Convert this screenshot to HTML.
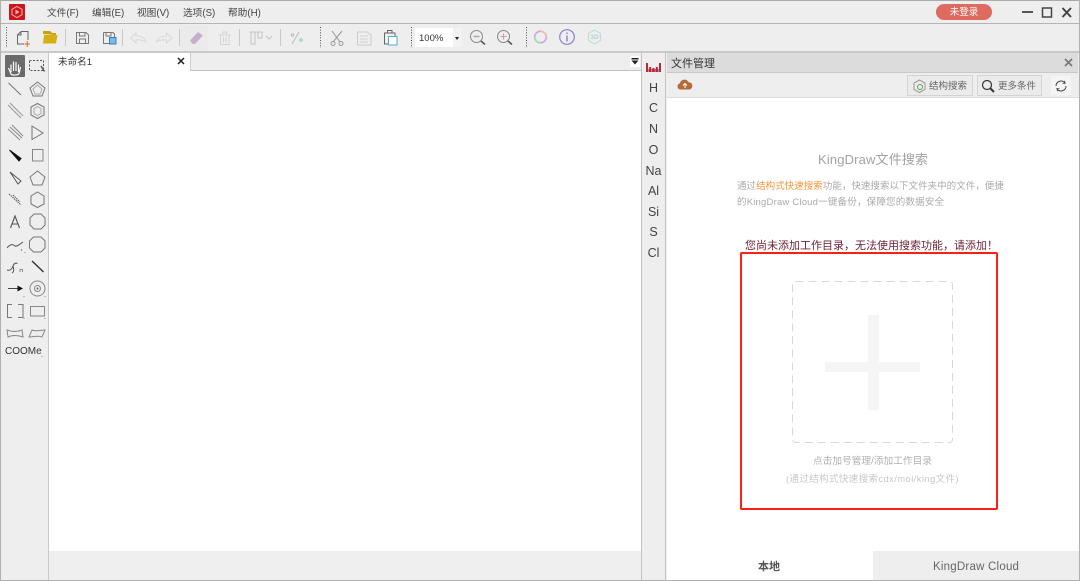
<!DOCTYPE html>
<html><head><meta charset="utf-8"><style>
html,body{margin:0;padding:0}
body{width:1080px;height:581px;overflow:hidden;position:relative;background:#eee;font-family:"Liberation Sans","Noto Sans CJK SC",sans-serif;color:#444}
#w{position:absolute;left:0;top:0;width:1080px;height:581px;filter:blur(.3px)}
.a{position:absolute;white-space:nowrap}
.m{font-size:9.7px;top:7px;color:#444;line-height:13px}
.el{position:absolute;left:642px;width:23px;text-align:center;font-size:12.5px;color:#444;line-height:16px}
svg{position:absolute;overflow:visible}
</style></head><body><div id="w">
<div class="a" style="left:0;top:0;width:1080px;height:1px;background:#aaa"></div>
<div class="a" style="left:0;top:23px;width:1080px;height:1px;background:#b4b4b4"></div>
<div class="a" style="left:0;top:51px;width:1080px;height:2px;background:#c8c8c8"></div>
<div class="a" style="left:0;top:0;width:1px;height:581px;background:#b0b0b0"></div>

<!-- logo -->
<svg style="left:9px;top:4px" width="16" height="16"><rect width="16" height="16" rx="1" fill="#c8161d"/><path d="M8 2.500L13 5.300V10.700L8 13.500L3 10.700V5.300Z" fill="none" stroke="#f6b0b0" stroke-width="1"/><path d="M6.500 5.500L10.500 8L6.500 10.500Z" fill="#f6b0b0"/></svg>
<div class="a m" style="left:47px">文件(F)</div>
<div class="a m" style="left:92px">编辑(E)</div>
<div class="a m" style="left:137px">视图(V)</div>
<div class="a m" style="left:183px">选项(S)</div>
<div class="a m" style="left:228px">帮助(H)</div>
<div class="a" style="left:936px;top:4px;width:56px;height:16px;border-radius:8px;background:#dd6b5f;color:#fff;font-size:9.500px;line-height:18px;text-align:center;overflow:hidden">未登录</div>
<svg style="left:1020px;top:5px" width="55" height="15" fill="none" stroke="#444" stroke-width="1.800"><path d="M2 7H13"/><rect x="22.500" y="3" width="9" height="9" stroke-width="1.500"/><path d="M42.500 3L51 12M51 3L42.500 12" stroke-width="2"/></svg>

<!-- toolbar icons -->
<svg style="left:0;top:24px" width="640" height="27" fill="none" stroke="#888" stroke-width="1">
<path d="M6.500 3V24M320.500 3V24M411.500 3V24M526.500 3V24" stroke="#555" stroke-dasharray="1 1.600"/>
<path d="M65.500 5V22M122.500 5V22M179.500 5V22M239.500 5V22M280.500 5V22" stroke="#c8c8c8"/>
<rect x="180" y="1" width="28" height="25" fill="#ebebeb" stroke="none"/>
<path d="M21 7.500L17.500 11V20H24M21 7.500H28V16M17.500 11H21V7.500" stroke="#666"/><path d="M24.500 20H30M27.200 17V23" stroke="#e8662c"/>
<path d="M43 10V7H50L52 9H56V11" fill="#c7a10c" stroke="none"/><path d="M43 19.500L44 11H57.500L56 19.500Z" fill="#d6b013" stroke="none"/>
<path d="M76.500 8.500H86L88.500 11V19.500H76.500ZM79.500 8.500V12H85V8.500M79.500 19.500V15H85.500V19.500" stroke="#777"/>
<path d="M103.500 8.500H113L114.500 10V13M103.500 8.500V19.500H109M106 8.500V12H111V8.500" stroke="#777"/><rect x="109.500" y="13.500" width="6.500" height="6.500" fill="#7ab8e6" stroke="#3a80c0"/>
<path d="M130.500 14L136 9V12C141 12 145 14 146 18C143 16 140 15.500 136 16V19Z" stroke="#d8d8d8"/>
<path d="M172 14L166.500 9V12C161.500 12 157.500 14 156.500 18C159.500 16 162.500 15.500 166.500 16V19Z" stroke="#d8d8d8"/>
<path d="M190 16.500L198 8L203 11.500L195 20H192.500Z" fill="#c5b0d0" stroke="none"/>
<path d="M218.500 11H231M220.500 11V20.500H229V11M223 11V8H226.500V11M223.500 13V18.500M226 13V18.500" stroke="#d4d4d4"/>
<path d="M249.500 8H263M251 8V20H255V8M258 8V14H262V8M266 12L269 15L272 12" stroke="#c4c4c4"/>
<path d="M299 8L292 20" stroke="#bbb"/><circle cx="292.500" cy="11" r="1.300" stroke="#bbb"/><circle cx="301" cy="16" r="1.300" stroke="#8cc"/>
<path d="M332 7L340 18M342 7L333 18" stroke="#999"/><circle cx="333" cy="19.500" r="2" stroke="#999"/><circle cx="341" cy="19.500" r="2" stroke="#999"/>
<path d="M357.500 8H367L371 11V21H357.500Z" stroke="#ccc"/><path d="M360 12H368M360 15H368M360 18H368" stroke="#d8cdd8"/>
<path d="M384.500 9H395V20H384.500ZM387.500 9V6.500H392V9" stroke="#666"/><rect x="388.500" y="12.500" width="8.500" height="8.500" fill="#fff" stroke="#5aa7d8"/>
<circle cx="476.500" cy="12.500" r="6" stroke="#888"/><path d="M473.500 12.500H479.500" stroke="#aaa" stroke-width="1.500"/><path d="M481 17L485 20.500" stroke="#555" stroke-width="1.500"/>
<circle cx="503.500" cy="12.500" r="6" stroke="#888"/><path d="M500.500 12.500H506.500M503.500 9.500V15.500" stroke="#d59ab0"/><path d="M508 17L512 20.500" stroke="#555" stroke-width="1.500"/>
<circle cx="540.500" cy="13" r="5.800" stroke="#c9a8e0" stroke-width="1.600"/><path d="M540.500 7.200A5.800 5.800 0 0 1 546.300 13" stroke="#f0c0a0" stroke-width="1.600"/><path d="M534.700 13A5.800 5.800 0 0 0 540.500 18.800" stroke="#9fe0b0" stroke-width="1.600"/>
<circle cx="567" cy="13" r="7.300" stroke="#8a7fd0" stroke-width="1.200"/><path d="M567 11.500V17.500M567 8.500V10" stroke="#8a7fd0" stroke-width="1.400"/>
<path d="M594.500 6L600.500 9.500V16.500L594.500 20L588.500 16.500V9.500Z" stroke="#c4dedd" stroke-width="1.200"/>
</svg>
<div class="a" style="left:588px;top:33px;width:13px;text-align:center;font-size:6.500px;font-weight:bold;color:#b5d3d3;line-height:9px">3D</div>
<div class="a" style="left:415px;top:28px;width:38px;height:19px;background:#fff"></div>
<div class="a" style="left:453px;top:28px;width:9px;height:19px;background:#f2f2f2"></div>
<div class="a" style="left:419px;top:32px;font-size:9.500px;line-height:13px;color:#333">100%</div>
<div class="a" style="left:455px;top:37px;width:0;height:0;border:2.500px solid transparent;border-top:3px solid #222"></div>

<!-- left tool column -->
<div class="a" style="left:48px;top:53px;width:1px;height:527px;background:#c8c8c8"></div>
<div class="a" style="left:5px;top:55px;width:20px;height:22px;background:#6a6a6a;border-radius:1px"></div>
<svg style="left:0;top:0" width="48" height="360" fill="none" stroke="#777" stroke-width="1">
<path d="M11 72V64.500M13.500 71V61.500M16 71V62M18.500 72V64.500M8.500 68L11 74C12 75.500 18 75.500 19 73.500L20.500 67" stroke="#fff" stroke-width="1.200"/>
<rect x="29.500" y="60.500" width="14" height="10" stroke="#555" stroke-dasharray="2 1.500"/><path d="M41 66L44.500 71.500" stroke="#555" stroke-width="1.500"/>
<path d="M8.500 83L21 95"/>
<path d="M37.500 82L45 88L42 96H33L30 88Z"/><path d="M37.500 85L42 89L40 94H35L33 89Z" stroke="#aaa"/>
<path d="M8 105L21 118M10 103L23 116" stroke="#999"/>
<path d="M37.500 103.500L44 107V115L37.500 118.500L31 115V107Z"/><path d="M37.500 106.500L41 108.500V113.500L37.500 115.500L34 113.500V108.500Z" stroke="#aaa"/>
<path d="M8 129L20 140M10 127L22 138M12 125L23 136" stroke="#888"/>
<path d="M32 126V139.500L43 133Z"/>
<path d="M9.500 150L21 158.500L19 161Z" fill="#111" stroke="#111"/>
<rect x="32.500" y="149.500" width="10.500" height="11.500" stroke="#888"/>
<path d="M10 172L21 181L18 184Z" stroke="#555"/>
<path d="M37.500 171L45 177L42 185H33L30 177Z"/>
<path d="M9 194L21 205M13 195L20 202" stroke="#555" stroke-dasharray="1.500 .8"/>
<path d="M37.500 192L44 196V204L37.500 207.500L31 204V196Z"/>
<path d="M10.500 228L15 216L19.500 228M12 224H18" stroke="#555" stroke-width="1.100"/>
<path d="M34 214H41L45 218V225L41 229H34L30 225V218Z"/>
<path d="M7 248C10 244 13 244 15 246C17 247 20 244 23 242" stroke="#555"/><circle cx="21.500" cy="250" r=".8" fill="#777" stroke="none"/>
<path d="M33.500 237H41L45 241V248L41 252H33.500L29.500 248V241Z"/>
<path d="M7 270C10 271 12 269 13 266C14 263 17 262 17 264M13 266C14 270 14 272 12 273" stroke="#555"/><path d="M20 272V269.500H22.500V272" stroke="#777" stroke-width=".8"/>
<path d="M32 261L43.500 272" stroke="#333" stroke-width="1.400"/>
<path d="M8 288.500H18" stroke="#444"/><path d="M17.500 285.500L23 288.500L17.500 291.500Z" fill="#111" stroke="none"/>
<circle cx="37.500" cy="288.500" r="7.500" stroke="#888"/><circle cx="37.500" cy="288.500" r="3" stroke="#888"/><circle cx="37.500" cy="288.500" r="1" fill="#666" stroke="none"/>
<path d="M12 304.500H7.500V317.500H12M18 304.500H23V317.500H18" stroke="#777"/>
<rect x="30.500" y="306.500" width="14" height="9.500" stroke="#888"/>
<path d="M7 330C12 332 17 332 22 330L23 337C17 335 12 335 8 337Z" stroke="#888"/>
<path d="M32 330C36 332 40 330 45 330L42 337C38 335 34 337 29 337Z" stroke="#888"/>
<path d="M24 296V297M24 318V319M45 296V297M45 318V319M25 252V253M42 356V357" stroke="#999" stroke-width="1.200"/>
</svg>
<div class="a" style="left:5px;top:345px;font-size:10px;line-height:14px;color:#333">COOMe</div>

<!-- tab bar -->
<div class="a" style="left:49px;top:53px;width:592px;height:17px;background:#eee;border-bottom:1px solid #c4c4c4"></div>
<div class="a" style="left:49px;top:53px;width:141px;height:18px;background:#fff"></div>
<div class="a" style="left:190px;top:53px;width:1px;height:18px;background:#ccc"></div>
<div class="a" style="left:58px;top:56px;font-size:9.600px;line-height:13px;color:#333">未命名1</div>
<svg style="left:177px;top:57px" width="9" height="9" stroke="#222" stroke-width="1.500"><path d="M1 1L7 7M7 1L1 7"/></svg>
<div class="a" style="left:630px;top:56px;width:10px;height:11px;background:#fff"></div>
<svg style="left:631px;top:58px" width="8" height="8"><path d="M0.500 0H7.500V1.500H0.500ZM0.500 2.500H7.500L4 6.500Z" fill="#222"/></svg>

<!-- canvas -->
<div class="a" style="left:49px;top:71px;width:592px;height:480px;background:#fff"></div>
<div class="a" style="left:49px;top:551px;width:592px;height:29px;background:#efefef"></div>
<div class="a" style="left:641px;top:53px;width:1px;height:527px;background:#c4c4c4"></div>

<!-- element column -->
<svg style="left:646px;top:63px" width="15" height="9" fill="#b12a3e"><path d="M0 0H2V9H0ZM3.200 4H5.200V9H3.200ZM6.500 5H8.500V9H6.500ZM9.800 4H11.800V9H9.800ZM13 0H15V9H13Z"/><path d="M0 6H15V9H0Z"/><path d="M2.500 6V9M5.800 6V9M9.100 6V9M12.400 6V9" stroke="#eebcc4" stroke-width=".6"/></svg>
<div class="el" style="top:80px">H</div>
<div class="el" style="top:100px">C</div>
<div class="el" style="top:121px">N</div>
<div class="el" style="top:142px">O</div>
<div class="el" style="top:163px">Na</div>
<div class="el" style="top:183px">Al</div>
<div class="el" style="top:204px">Si</div>
<div class="el" style="top:224px">S</div>
<div class="el" style="top:245px">Cl</div>
<div class="a" style="left:665px;top:53px;width:1px;height:527px;background:#c4c4c4"></div>

<!-- right panel -->
<div class="a" style="left:667px;top:53px;width:411px;height:19px;background:#dcdcdc;border-bottom:1px solid #c8c8c8"></div>
<div class="a" style="left:671px;top:57px;font-size:11px;line-height:14px;color:#333">文件管理</div>
<svg style="left:1064px;top:58px" width="9" height="9" stroke="#777" stroke-width="1.600"><path d="M1 1L8 8M8 1L1 8"/></svg>
<div class="a" style="left:667px;top:73px;width:412px;height:24px;background:#eee;border-bottom:1px solid #ddd"></div>
<svg style="left:677px;top:78px" width="16" height="13"><path d="M3.500 11.500A3.200 3.200 0 0 1 3 5.200A4.500 4.500 0 0 1 11.500 4.200A3.700 3.700 0 0 1 12.500 11.500Z" fill="#b46a3a"/><path d="M8 10V6M6 7.500L8 5.500L10 7.500" stroke="#fff" fill="none"/></svg>
<div class="a" style="left:907px;top:75px;width:64px;height:19px;border:1px solid #d4d4d4;background:#ebebeb"></div>
<svg style="left:913px;top:79px" width="13" height="14" fill="none"><path d="M6.500 1L12 4V10.500L6.500 13.500L1 10.500V4Z" stroke="#999"/><circle cx="7" cy="8" r="2.500" stroke="#6a9a50"/></svg>
<div class="a" style="left:929px;top:80px;font-size:9.500px;line-height:13px;color:#666">结构搜索</div>
<div class="a" style="left:977px;top:75px;width:63px;height:19px;border:1px solid #d4d4d4;background:#ebebeb"></div>
<svg style="left:981px;top:79px" width="14" height="14" fill="none" stroke="#333"><circle cx="6" cy="6" r="4.500" stroke-width="1.200"/><path d="M9.500 9.500L13 13" stroke-width="2"/></svg>
<div class="a" style="left:998px;top:80px;font-size:9.500px;line-height:13px;color:#666">更多条件</div>
<div class="a" style="left:1051px;top:76px;width:20px;height:19px;background:#f5f5f5"></div>
<svg style="left:1055px;top:80px" width="12" height="12" fill="none" stroke="#444"><path d="M1 6A5 5 0 0 1 9.800 2.800M11 6A5 5 0 0 1 2.200 9.200"/><path d="M9.500 0.800L10.200 3.500L7.500 3.500M2.500 11.200L1.800 8.500L4.500 8.500" stroke-width=".8"/></svg>

<div class="a" style="left:667px;top:98px;width:412px;height:482px;background:#fff"></div>
<div class="a" style="left:818px;top:151px;font-size:13px;line-height:17px;color:#a2a2a2;letter-spacing:.15px">KingDraw文件搜索</div>
<div class="a" style="left:737px;top:180px;font-size:9.500px;line-height:13px;color:#aaa;letter-spacing:.03px">通过<span style="color:#f5963c">结构式快速搜索</span>功能，快速搜索以下文件夹中的文件，便捷</div>
<div class="a" style="left:737px;top:196px;font-size:9.500px;line-height:13px;color:#aaa;letter-spacing:.2px">的KingDraw Cloud一键备份，保障您的数据安全</div>
<div class="a" style="left:745px;top:239px;font-size:11px;line-height:14px;color:#6b2438">您尚未添加工作目录，无法使用搜索功能，请添加！</div>
<div class="a" style="left:740px;top:252px;width:254px;height:254px;border:2px solid #ff1f14;border-radius:2px"></div>
<svg style="left:792px;top:281px" width="162" height="163" fill="none"><rect x=".5" y=".5" width="160" height="161" rx="3" stroke="#d8d8d8" stroke-dasharray="8 5"/><path d="M76 34H87V81H128V91H87V129H76V91H33V81H76Z" fill="#f5f5f5"/></svg>
<div class="a" style="left:813px;top:455px;font-size:9.700px;line-height:13px;color:#b0b0b0">点击加号管理/添加工作目录</div>
<div class="a" style="left:786px;top:473px;font-size:9.500px;line-height:13px;color:#c8c8c8;letter-spacing:.37px">(通过结构式快速搜索cdx/mol/king文件)</div>

<div class="a" style="left:873px;top:551px;width:206px;height:29px;background:#eee"></div>
<div class="a" style="left:758px;top:560px;font-size:11px;line-height:14px;color:#555;font-weight:bold">本地</div>
<div class="a" style="left:933px;top:560px;font-size:11.500px;line-height:14px;color:#666;letter-spacing:.22px">KingDraw Cloud</div>
<div class="a" style="left:0;top:580px;width:1080px;height:1px;background:#b0b0b0"></div>
<div class="a" style="left:1079px;top:0;width:1px;height:581px;background:#b0b0b0"></div>
</div></body></html>
